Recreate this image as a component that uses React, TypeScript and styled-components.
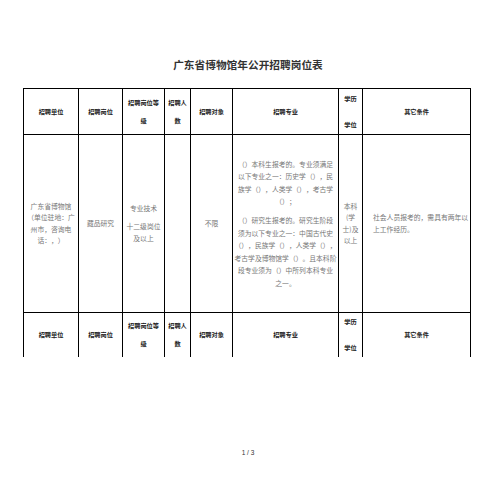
import styled, { createGlobalStyle } from 'styled-components';

const GlobalStyle = createGlobalStyle`
  html, body {
    margin: 0;
    padding: 0;
    background: #ffffff;
  }
  body {
    font-family: "Noto Sans CJK SC", "Noto Sans", sans-serif;
    text-spacing-trim: space-all;
  }
`

const Page = styled.div`
  width: 496px;
  height: 489px;
  display: flex;
  flex-direction: column;
  align-items: center;
  box-sizing: border-box;
  padding-top: 57px;
  overflow: hidden;
`

const Title = styled.div`
  font-size: 10.7px;
  line-height: 16px;
  font-weight: 700;
  color: #333;
  margin-bottom: 15px;
`

const Sheet = styled.table`
  border-collapse: collapse;
  table-layout: fixed;
  width: 447px;
  margin-left: -2px;
`

const HeadCell = styled.td<{ $open?: boolean }>`
  border: 1px solid #000;
  border-bottom: ${props => props.$open ? 'none' : '1px solid #000'};
  height: ${props => props.$open ? 44 : 45}px;
  padding: 0 2px;
  text-align: center;
  vertical-align: middle;
  font-size: 6.2px;
  font-weight: 700;
  color: #222;
  line-height: 18px;
`

const Stack = styled.div<{ $gap: number }>`
  display: flex;
  flex-direction: column;
  align-items: center;
  gap: ${props => props.$gap}px;
  line-height: 8px;
`

const Cell = styled.td<{ $left?: boolean }>`
  border: 1px solid #000;
  height: 177px;
  padding: ${props => props.$left ? '0 0 0 10px' : '0 1px'};
  text-align: ${props => props.$left ? 'left' : 'center'};
  vertical-align: middle;
  font-size: 6.8px;
  line-height: 11.5px;
  color: #777;
  white-space: nowrap;
`

const Para = styled.p<{ $space?: number }>`
  margin: 0;
  margin-top: ${props => props.$space || 0}px;
`

const Major = styled.div`
  line-height: 12.6px;
  text-align: center;
`

const PageNo = styled.div`
  margin-top: auto;
  margin-bottom: 33px;
  font-family: "Liberation Sans", Arial, sans-serif;
  font-size: 6.5px;
  color: #333;
`

const widths = [55, 44, 42, 26, 42, 106, 24, 108]

function Lines({ lines }: { lines: string[] }) {
  return (
    <>
      {lines.map((l, i) => (
        <span key={i}>
          {l}
          {i < lines.length - 1 && <br />}
        </span>
      ))}
    </>
  )
}

function HeaderRow({ open }: { open?: boolean }) {
  return (
    <tr>
      <HeadCell $open={open}>招聘单位</HeadCell>
      <HeadCell $open={open}>招聘岗位</HeadCell>
      <HeadCell $open={open}>招聘岗位等<br />级</HeadCell>
      <HeadCell $open={open}>招聘人<br />数</HeadCell>
      <HeadCell $open={open}>招聘对象</HeadCell>
      <HeadCell $open={open}>招聘专业</HeadCell>
      <HeadCell $open={open}>
        <Stack $gap={18}>
          <span>学历</span>
          <span>学位</span>
        </Stack>
      </HeadCell>
      <HeadCell $open={open}>其它条件</HeadCell>
    </tr>
  )
}

export default function App() {
  return (
    <>
      <GlobalStyle />
      <Page>
        <Title>广东省博物馆年公开招聘岗位表</Title>
        <Sheet>
          <colgroup>
            {widths.map((w, i) => <col key={i} style={{ width: w }} />)}
          </colgroup>
          <tbody>
            <HeaderRow />
            <tr>
              <Cell>
                <Lines lines={['广东省博物馆', '（单位驻地：广', '州市，咨询电', '话：，）']} />
              </Cell>
              <Cell>藏品研究</Cell>
              <Cell>
                <Para>专业技术</Para>
                <Para $space={7}><Lines lines={['十二级岗位', '及以上']} /></Para>
              </Cell>
              <Cell />
              <Cell>不限</Cell>
              <Cell>
                <Major>
                  <Para>
                    <Lines lines={['（）本科生报考的。专业须满足', '以下专业之一：历史学（），民', '族学（），人类学（），考古学', '（）；']} />
                  </Para>
                  <Para $space={6}>
                    <Lines lines={['（）研究生报考的。研究生阶段', '须为以下专业之一：中国古代史', '（），民族学（），人类学（），', '考古学及博物馆学（）。且本科阶', '段专业须为（）中所列本科专业', '之一。']} />
                  </Para>
                </Major>
              </Cell>
              <Cell><Lines lines={['本科', '(学', '士)及', '以上']} /></Cell>
              <Cell $left><Lines lines={['社会人员报考的，需具有两年以', '上工作经历。']} /></Cell>
            </tr>
            <HeaderRow open />
          </tbody>
        </Sheet>
        <PageNo>1 / 3</PageNo>
      </Page>
    </>
  )
}
